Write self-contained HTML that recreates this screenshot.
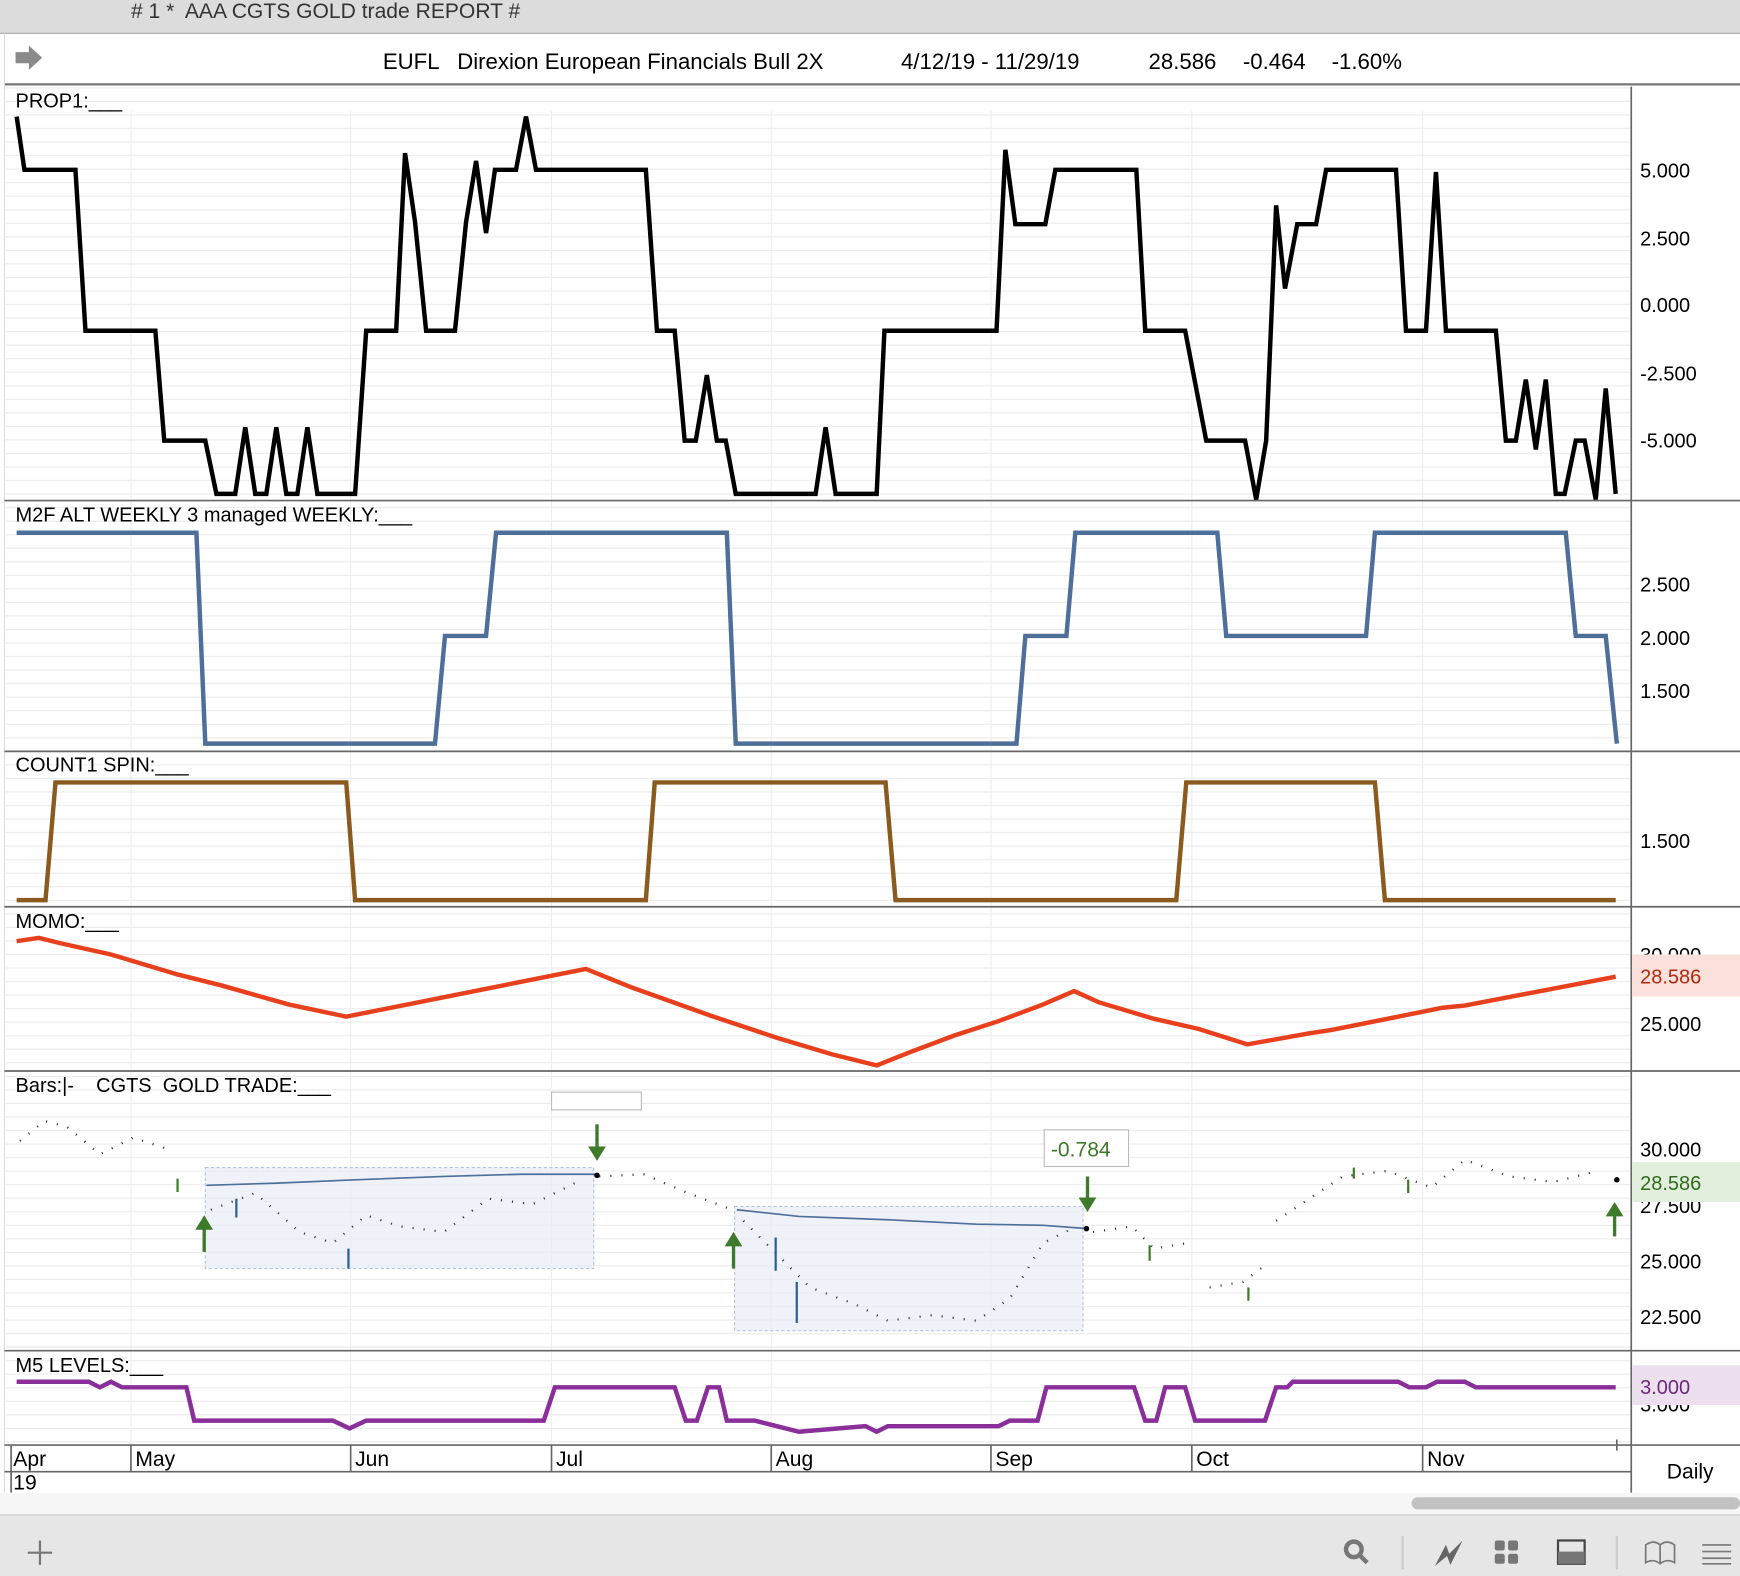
<!DOCTYPE html>
<html><head><meta charset="utf-8"><style>
html,body{margin:0;padding:0;background:#fff;width:1740px;height:1576px;overflow:hidden}
svg{display:block}
text{font-family:"Liberation Sans",sans-serif;white-space:pre}
</style></head><body>
<svg width="1740" height="1576" viewBox="0 0 1568 1420" preserveAspectRatio="none" xmlns="http://www.w3.org/2000/svg" xml:space="preserve">
<defs>
<pattern id="hg" width="1568" height="12.2" patternUnits="userSpaceOnUse"><line x1="0" y1="6" x2="1568" y2="6" stroke="#ececec" stroke-width="1"/></pattern>
</defs>
<rect width="1568" height="1420" fill="#fff"/>
<rect x="0" y="0" width="1568" height="30" fill="#dcdcdc"/>
<line x1="0" y1="30" x2="1568" y2="30" stroke="#a8a8a8"/>
<text x="118" y="16" font-size="19" fill="#333"># 1 *  AAA CGTS GOLD trade REPORT #</text>
<path d="M14 47 h12 v-6 l12 11 -12 11 v-6 h-12z" fill="#8a8a8a"/>
<g font-size="20" fill="#000">
<text x="345" y="62">EUFL   Direxion European Financials Bull 2X</text>
<text x="812" y="62">4/12/19 - 11/29/19</text>
<text x="1035" y="62">28.586</text>
<text x="1120" y="62">-0.464</text>
<text x="1200" y="62">-1.60%</text>
</g>
<line x1="4" y1="76" x2="1568" y2="76" stroke="#777" stroke-width="2"/>
<line x1="4" y1="30" x2="4" y2="1345" stroke="#ddd"/>
<rect x="5" y="78" width="1465" height="1224" fill="url(#hg)"/>
<g stroke="#eeeeee" stroke-width="1">
<line x1="118" y1="100" x2="118" y2="1302"/><line x1="316" y1="100" x2="316" y2="1302"/><line x1="497" y1="100" x2="497" y2="1302"/><line x1="695" y1="100" x2="695" y2="1302"/><line x1="893" y1="100" x2="893" y2="1302"/><line x1="1074" y1="100" x2="1074" y2="1302"/><line x1="1282" y1="100" x2="1282" y2="1302"/>
</g>
<g stroke="#666" stroke-width="1.5">
<line x1="4" y1="451" x2="1568" y2="451"/><line x1="4" y1="677" x2="1568" y2="677"/><line x1="4" y1="817" x2="1568" y2="817"/><line x1="4" y1="965" x2="1568" y2="965"/><line x1="4" y1="1217" x2="1568" y2="1217"/><line x1="4" y1="1302" x2="1568" y2="1302"/><line x1="4" y1="1326" x2="1470" y2="1326"/>
</g>
<line x1="1470" y1="78" x2="1470" y2="1345" stroke="#666" stroke-width="1.5"/>
<g font-size="18" fill="#000">
<text x="14" y="97">PROP1:___</text>
<text x="14" y="470">M2F ALT WEEKLY 3 managed WEEKLY:___</text>
<text x="14" y="695">COUNT1 SPIN:___</text>
<text x="14" y="836">MOMO:___</text>
<text x="14" y="984">Bars:|-    CGTS  GOLD TRADE:___</text>
<text x="14" y="1236">M5 LEVELS:___</text>
</g>
<g font-size="18" fill="#000">
<text x="1478" y="160">5.000</text><text x="1478" y="221">2.500</text><text x="1478" y="281">0.000</text><text x="1478" y="343">-2.500</text><text x="1478" y="403">-5.000</text>
<text x="1478" y="533">2.500</text><text x="1478" y="581">2.000</text><text x="1478" y="629">1.500</text>
<text x="1478" y="764">1.500</text>
<text x="1478" y="867">30.000</text><text x="1478" y="929">25.000</text>
<text x="1478" y="1042">30.000</text><text x="1478" y="1093">27.500</text><text x="1478" y="1143">25.000</text><text x="1478" y="1193">22.500</text>
<text x="1478" y="1272">3.000</text>
</g>
<rect x="1471" y="860" width="97" height="38" fill="#fbe0dc"/>
<text x="1478" y="886" font-size="18" fill="#b02a10">28.586</text>
<rect x="1471" y="1047" width="97" height="36" fill="#e2efdc"/>
<text x="1478" y="1072" font-size="18" fill="#2f6b1e">28.586</text>
<rect x="1471" y="1230" width="97" height="36" fill="#ece0ef"/>
<text x="1478" y="1256" font-size="18" fill="#6b2a78">3.000</text>
<polyline fill="none" stroke="#000" stroke-width="4" points="15,105 22,153 68,153 77,298 140,298 148,397 185,397 195,445 212,445 221,385 230,445 240,445 249,385 258,445 268,445 277,385 286,445 320,445 330,298 357,298 365,138 374,200 384,298 410,298 420,200 429,145 438,210 446,153 465,153 474,105 483,153 582,153 592,298 608,298 617,397 627,397 637,338 646,397 654,397 663,445 735,445 744,385 753,445 790,445 797,298 898,298 906,135 915,202 942,202 951,153 1024,153 1032,298 1068,298 1087,397 1122,397 1132,450 1141,397 1150,185 1158,260 1169,202 1186,202 1195,153 1258,153 1267,298 1285,298 1294,155 1303,298 1348,298 1357,397 1366,397 1375,342 1384,405 1393,342 1402,445 1410,445 1420,397 1428,397 1438,450 1447,350 1456,445"/>
<polyline fill="none" stroke="#4f6f9b" stroke-width="4" points="15,480 177,480 185,670 392,670 401,573 438,573 447,480 655,480 663,670 916,670 924,573 961,573 969,480 1097,480 1105,573 1231,573 1239,480 1411,480 1420,573 1447,573 1457,670"/>
<polyline fill="none" stroke="#8b5a1e" stroke-width="4" points="15,811 41,811 50,705 312,705 320,811 582,811 590,705 798,705 807,811 1060,811 1069,705 1239,705 1248,811 1456,811"/>
<polyline fill="none" stroke="#e8401c" stroke-width="4" points="15,848 35,845 55,850 100,860 160,878 200,888 260,905 312,916 528,873 570,890 640,915 700,935 750,950 790,960 820,948 860,933 900,920 940,905 968,893 990,903 1040,918 1080,927 1124,941 1180,931 1200,928 1300,908 1320,906 1456,880"/>
<rect x="185" y="1052" width="350" height="91" fill="#e8edf6" fill-opacity="0.7" stroke="#b8c4dc" stroke-dasharray="3,2"/>
<rect x="662" y="1087" width="314" height="112" fill="#e8edf6" fill-opacity="0.7" stroke="#b8c4dc" stroke-dasharray="3,2"/>
<polyline fill="none" stroke="#4f6f9b" stroke-width="1.5" points="186,1068 250,1066 320,1063 400,1060 470,1058 538,1058"/>
<polyline fill="none" stroke="#4f6f9b" stroke-width="1.5" points="664,1090 720,1096 800,1099 880,1103 940,1104 980,1107"/>
<g fill="#000">
<circle cx="538" cy="1059" r="2.5"/><circle cx="979" cy="1107" r="2.5"/><circle cx="1457" cy="1063" r="2.5"/>
</g>
<g stroke="#333" stroke-width="2" stroke-dasharray="1,9" fill="none">
<polyline points="18,1028 40,1010 60,1015 90,1040 120,1025 150,1035"/>
<polyline points="190,1090 230,1075 270,1110 300,1120 330,1095 360,1105 400,1110 440,1080 480,1085 520,1065"/>
<polyline points="540,1060 580,1058 620,1075 660,1090"/>
<polyline points="670,1100 700,1130 730,1160 770,1175 800,1190 840,1185 880,1190 910,1170 940,1120 970,1105"/>
<polyline points="985,1110 1020,1105 1040,1125 1070,1120"/>
<polyline points="1090,1160 1120,1155 1140,1140"/>
<polyline points="1150,1100 1180,1080 1210,1060 1250,1055 1290,1070 1320,1045 1360,1060 1400,1065 1440,1055"/>
</g>
<g stroke="#3d7a2a" stroke-width="2">
<line x1="160" y1="1062" x2="160" y2="1074"/><line x1="1036" y1="1122" x2="1036" y2="1136"/><line x1="1125" y1="1160" x2="1125" y2="1172"/><line x1="1269" y1="1063" x2="1269" y2="1075"/><line x1="1220" y1="1052" x2="1220" y2="1062"/>
</g>
<g stroke="#2a5d9a" stroke-width="2">
<line x1="314" y1="1125" x2="314" y2="1143"/><line x1="718" y1="1155" x2="718" y2="1192"/><line x1="699" y1="1115" x2="699" y2="1145"/><line x1="213" y1="1080" x2="213" y2="1097"/>
</g>
<g fill="#3d7a2a" stroke="#3d7a2a" stroke-width="3">
<line x1="184" y1="1105" x2="184" y2="1128"/><path d="M176 1108 L184 1095 L192 1108Z" stroke="none"/>
<line x1="661" y1="1120" x2="661" y2="1143"/><path d="M653 1123 L661 1110 L669 1123Z" stroke="none"/>
<line x1="1455" y1="1093" x2="1455" y2="1114"/><path d="M1447 1096 L1455 1083 L1463 1096Z" stroke="none"/>
<line x1="538" y1="1013" x2="538" y2="1036"/><path d="M530 1033 L538 1046 L546 1033Z" stroke="none"/>
<line x1="980" y1="1060" x2="980" y2="1082"/><path d="M972 1079 L980 1092 L988 1079Z" stroke="none"/>
</g>
<rect x="497" y="984" width="81" height="16" fill="#fff" stroke="#bbb"/>
<rect x="941" y="1018" width="76" height="33" fill="#fff" stroke="#bbb"/>
<text x="947" y="1042" font-size="19" fill="#3d7a2a">-0.784</text>
<polyline fill="none" stroke="#8a2e9a" stroke-width="4" points="15,1245 80,1245 90,1250 100,1245 110,1250 168,1250 175,1280 300,1280 315,1287 330,1280 490,1280 500,1250 608,1250 618,1280 628,1280 638,1250 648,1250 655,1280 680,1280 700,1285 720,1290 780,1285 790,1290 800,1285 900,1285 910,1280 935,1280 943,1250 1022,1250 1032,1280 1042,1280 1050,1250 1068,1250 1077,1280 1140,1280 1150,1250 1160,1250 1165,1245 1260,1245 1270,1250 1285,1250 1295,1245 1320,1245 1330,1250 1456,1250"/>
<g stroke="#666" stroke-width="1.5">
<line x1="10" y1="1302" x2="10" y2="1345"/><line x1="118" y1="1302" x2="118" y2="1326"/><line x1="316" y1="1302" x2="316" y2="1326"/><line x1="497" y1="1302" x2="497" y2="1326"/><line x1="695" y1="1302" x2="695" y2="1326"/><line x1="893" y1="1302" x2="893" y2="1326"/><line x1="1074" y1="1302" x2="1074" y2="1326"/><line x1="1282" y1="1302" x2="1282" y2="1326"/><line x1="1457" y1="1297" x2="1457" y2="1307"/>
</g>
<g font-size="19" fill="#000">
<text x="12" y="1321">Apr</text><text x="12" y="1342">19</text><text x="122" y="1321">May</text><text x="320" y="1321">Jun</text><text x="501" y="1321">Jul</text><text x="699" y="1321">Aug</text><text x="897" y="1321">Sep</text><text x="1078" y="1321">Oct</text><text x="1286" y="1321">Nov</text>
<text x="1502" y="1332">Daily</text>
</g>
<rect x="0" y="1345" width="1568" height="20" fill="#f6f6f6"/>
<rect x="1272" y="1349" width="296" height="11" rx="5.5" fill="#c2c2c2"/>
<rect x="0" y="1365" width="1568" height="55" fill="#e6e6e6"/>
<line x1="0" y1="1365" x2="1568" y2="1365" stroke="#c8c8c8"/>
<g stroke="#777" stroke-width="2"><line x1="36" y1="1388" x2="36" y2="1410"/><line x1="25" y1="1399" x2="47" y2="1399"/></g>
<circle cx="1220" cy="1396" r="7" fill="none" stroke="#777" stroke-width="4"/>
<line x1="1225" y1="1401" x2="1232" y2="1408" stroke="#777" stroke-width="4"/>
<line x1="1264" y1="1384" x2="1264" y2="1414" stroke="#ccc" stroke-width="2"/>
<path d="M1293 1411 L1303 1392 L1306 1400 L1318 1388 L1307 1410 L1304 1402Z" fill="#666"/>
<g fill="#777"><rect x="1347" y="1388" width="9" height="9" rx="2"/><rect x="1359" y="1388" width="9" height="9" rx="2"/><rect x="1347" y="1400" width="9" height="9" rx="2"/><rect x="1359" y="1400" width="9" height="9" rx="2"/></g>
<rect x="1404" y="1388" width="24" height="21" fill="none" stroke="#444" stroke-width="2"/><rect x="1404" y="1398" width="24" height="11" fill="#777"/>
<line x1="1457" y1="1384" x2="1457" y2="1414" stroke="#ccc" stroke-width="2"/>
<path d="M1483 1392 Q1490 1387 1496 1392 Q1502 1387 1509 1392 V1408 Q1502 1404 1496 1409 Q1490 1404 1483 1408Z M1496 1392 V1409" fill="none" stroke="#777" stroke-width="1.5"/>
<g stroke="#777" stroke-width="1.5"><line x1="1534" y1="1392" x2="1560" y2="1392"/><line x1="1534" y1="1398" x2="1560" y2="1398"/><line x1="1534" y1="1404" x2="1560" y2="1404"/><line x1="1534" y1="1409" x2="1560" y2="1409"/></g>
</svg>
</body></html>
